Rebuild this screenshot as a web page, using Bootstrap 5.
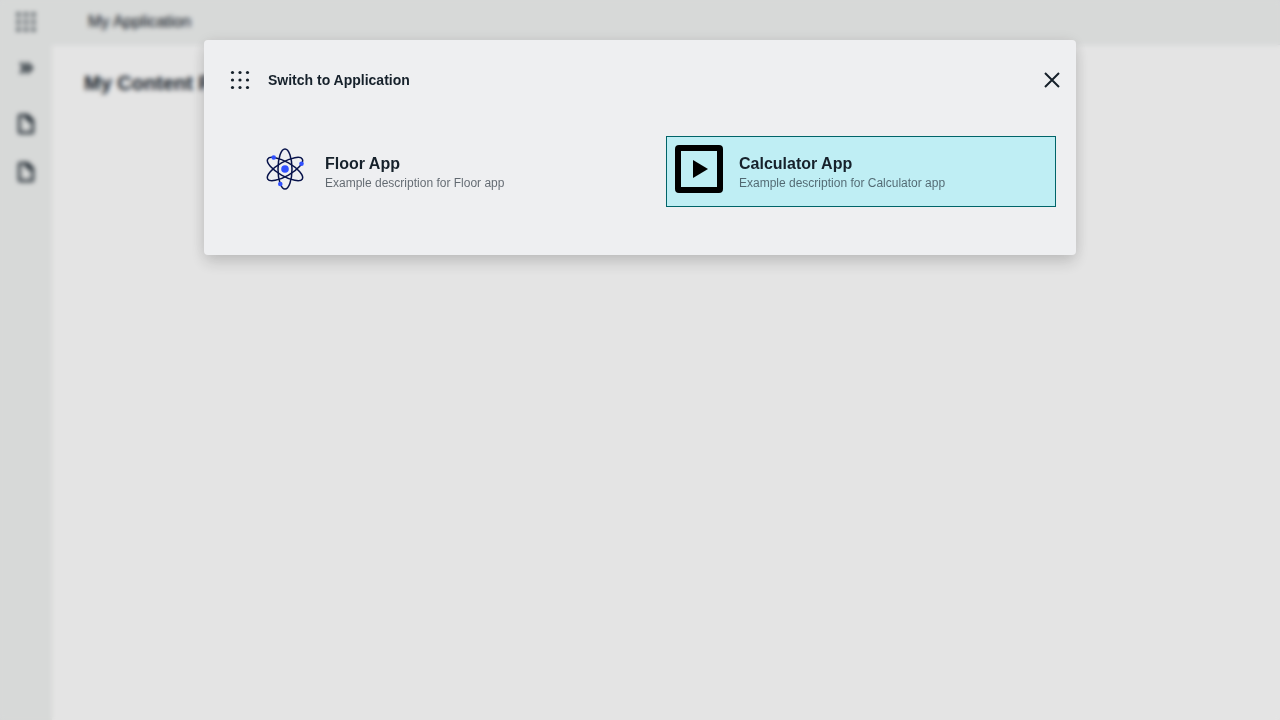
<!DOCTYPE html>
<html lang="en">
<head>
<meta charset="utf-8">
<meta name="viewport" content="width=device-width, initial-scale=1">
<title>My Application</title>
<link href="https://cdn.jsdelivr.net/npm/bootstrap@5.3.0/dist/css/bootstrap.min.css" rel="stylesheet">
<style>
  body { font-family: "Liberation Sans", Arial, sans-serif; color: #16212b; background: #fefefe; overflow: hidden; }
  svg { display: block; flex: none; }
  .app-header { height: 45px; background: #f0f2f1; border-bottom: 1px solid #e9ebee; }
  .app-header .brand { font-size: 16px; line-height: 24px; padding-left: 36px; -webkit-text-stroke: .15px; }
  .header-cell, .side-rail { width: 52px; }
  .side-rail { background: #f0f2f1; margin-top: -1px; }
  .rail-item { height: 48px; }
  .page-title { font-size: 20px; line-height: 28px; font-weight: 700; }
  .overlay { background: rgba(0, 0, 0, .1); backdrop-filter: blur(2.5px); }
  .switcher-dialog { width: 872px; max-width: 872px; margin: 40px auto 0; }
  .switcher { height: 215px; background: #eeeff1; border: 0; border-radius: 4px; color: #16212b; box-shadow: 0 8px 16px rgba(0, 0, 0, .14), 0 0 16px rgba(0, 0, 0, .08); }
  .switcher-head { height: 80px; padding: 0 12px 0 24px; }
  .switcher-title { font-size: 14px; line-height: 20px; font-weight: 700; margin-left: 16px; }
  .app-grid { display: grid; grid-template-columns: 390px 390px; gap: 24px; padding: 16px 20px 48px 48px; }
  .app-tile { height: 71px; padding: 8px; border: 1px solid transparent; color: inherit; text-decoration: none; }
  .app-tile.selected { background: #bfeef4; border-color: #006469; }
  .app-text { padding-top: 8px; }
  .app-name { font-size: 16px; line-height: 22px; font-weight: 700; }
  .app-desc { font-size: 12px; line-height: 16px; color: rgba(22, 33, 43, .65); }
</style>
</head>
<body>
<div class="d-flex flex-column vh-100">
  <header class="app-header d-flex align-items-center">
    <div class="header-cell d-flex justify-content-center">
      <svg width="24" height="24" viewBox="0 0 24 24" fill="#16212b"><circle cx="4.500" cy="4.500" r="1.900"/><circle cx="12" cy="4.500" r="1.900"/><circle cx="19.500" cy="4.500" r="1.900"/><circle cx="4.500" cy="12" r="1.900"/><circle cx="12" cy="12" r="1.900"/><circle cx="19.500" cy="12" r="1.900"/><circle cx="4.500" cy="19.500" r="1.900"/><circle cx="12" cy="19.500" r="1.900"/><circle cx="19.500" cy="19.500" r="1.900"/></svg>
    </div>
    <div class="brand">My Application</div>
  </header>
  <div class="d-flex flex-grow-1">
    <nav class="side-rail">
      <div class="rail-item d-flex justify-content-center align-items-center">
        <svg width="24" height="24" viewBox="0 0 24 24" fill="none" stroke="#16212b" stroke-width="2.800"><path d="M6.500 7l5 5-5 5M12.500 7l5 5-5 5"/></svg>
      </div>
      <div class="rail-item d-flex justify-content-center align-items-center mt-2">
        <svg width="24" height="24" viewBox="0 0 24 24" fill="#16212b"><path fill-rule="evenodd" d="M6 2h8l6 6v12a2 2 0 0 1-2 2H6a2 2 0 0 1-2-2V4a2 2 0 0 1 2-2zm.500 2.500v15h11V12c0-1.500-1-2-2.500-2.500-1.500-.500-2.500-1-3-2.500S11 4.500 9.500 4.500z"/></svg>
      </div>
      <div class="rail-item d-flex justify-content-center align-items-center">
        <svg width="24" height="24" viewBox="0 0 24 24" fill="#16212b"><path fill-rule="evenodd" d="M6 2h8l6 6v12a2 2 0 0 1-2 2H6a2 2 0 0 1-2-2V4a2 2 0 0 1 2-2zm.500 2.500v15h11V12c0-1.500-1-2-2.500-2.500-1.500-.500-2.500-1-3-2.500S11 4.500 9.500 4.500z"/></svg>
      </div>
    </nav>
    <main class="flex-grow-1 px-4 pt-4">
      <h1 class="page-title mb-0 ms-2">My Content Page</h1>
    </main>
  </div>
</div>

<div class="modal d-block overlay" tabindex="-1" role="dialog" aria-labelledby="switcher-title">
  <div class="modal-dialog switcher-dialog">
    <div class="modal-content switcher">
      <div class="switcher-head d-flex align-items-center">
        <svg width="24" height="24" viewBox="0 0 24 24" fill="#16212b"><circle cx="4.500" cy="4.500" r="1.600"/><circle cx="12" cy="4.500" r="1.600"/><circle cx="19.500" cy="4.500" r="1.600"/><circle cx="4.500" cy="12" r="1.600"/><circle cx="12" cy="12" r="1.600"/><circle cx="19.500" cy="12" r="1.600"/><circle cx="4.500" cy="19.500" r="1.600"/><circle cx="12" cy="19.500" r="1.600"/><circle cx="19.500" cy="19.500" r="1.600"/></svg>
        <div class="switcher-title" id="switcher-title">Switch to Application</div>
        <button type="button" class="btn p-0 border-0 ms-auto" aria-label="Close">
          <svg width="24" height="24" viewBox="0 0 24 24" fill="none" stroke="#16212b" stroke-width="2"><path d="M5 5l14 14M19 5L5 19"/></svg>
        </button>
      </div>
      <div class="app-grid">
        <a href="#" class="app-tile d-flex gap-3">
          <svg width="48" height="48" viewBox="0 0 48 48">
            <g fill="none" stroke="#07124a" stroke-width="1.500"><ellipse cx="24" cy="24" rx="7" ry="20"/><ellipse cx="24" cy="24" rx="7" ry="20" transform="rotate(60 24 24)"/><ellipse cx="24" cy="24" rx="7" ry="20" transform="rotate(-60 24 24)"/></g>
            <g fill="#304ffe"><circle cx="24" cy="24" r="3.800"/><circle cx="12.700" cy="12.500" r="2.300"/><circle cx="40.500" cy="18.700" r="2.300"/><circle cx="19.300" cy="39" r="2.300"/></g>
          </svg>
          <div class="app-text">
            <div class="app-name">Floor App</div>
            <div class="app-desc">Example description for Floor app</div>
          </div>
        </a>
        <a href="#" class="app-tile selected d-flex gap-3">
          <svg width="48" height="48" viewBox="0 0 48 48"><rect x="3" y="3" width="42" height="42" rx="1" fill="none" stroke="#000" stroke-width="6"/><path d="M18 15l15 9-15 9z"/></svg>
          <div class="app-text">
            <div class="app-name">Calculator App</div>
            <div class="app-desc">Example description for Calculator app</div>
          </div>
        </a>
      </div>
    </div>
  </div>
</div>
<script src="https://cdn.jsdelivr.net/npm/bootstrap@5.3.0/dist/js/bootstrap.bundle.min.js"></script>
</body>
</html>
